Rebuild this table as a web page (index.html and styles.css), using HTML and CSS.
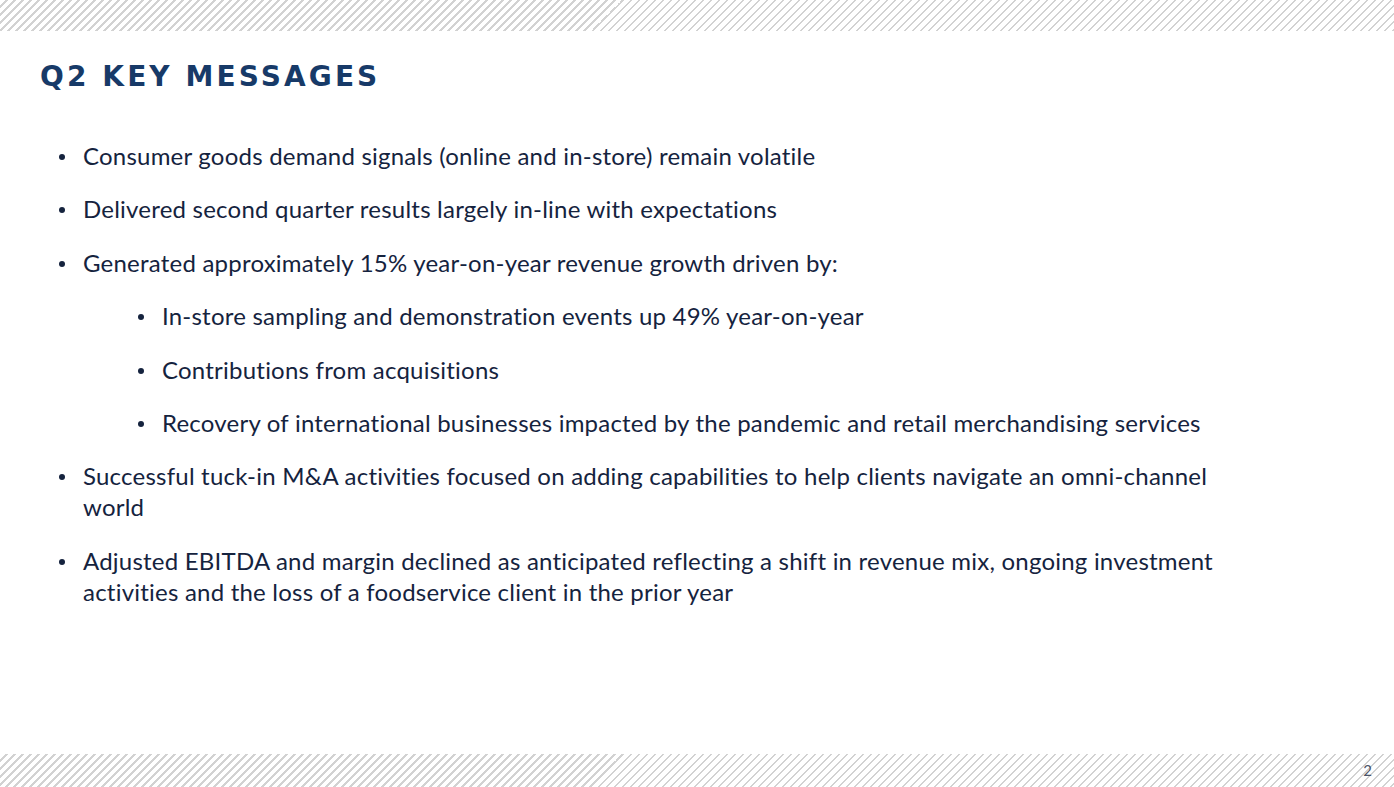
FILE: index.html
```html
<!DOCTYPE html>
<html>
<head>
<meta charset="utf-8">
<link rel="stylesheet" href="styles.css">
</head>
<body>
<div class="slide">
  <div class="band band-top"></div>
  <main class="content">
    <h1 class="title">Q2 KEY MESSAGES</h1>
    <ul class="list">
      <li>Consumer goods demand signals (online and in-store) remain volatile</li>
      <li>Delivered second quarter results largely in-line with expectations</li>
      <li>Generated approximately 15% year-on-year revenue growth driven by:
        <ul class="sublist">
          <li>In-store sampling and demonstration events up 49% year-on-year</li>
          <li>Contributions from acquisitions</li>
          <li>Recovery of international businesses impacted by the pandemic and retail merchandising services</li>
        </ul>
      </li>
      <li>Successful tuck-in M&amp;A activities focused on adding capabilities to help clients navigate an omni-channel world</li>
      <li>Adjusted EBITDA and margin declined as anticipated reflecting a shift in revenue mix, ongoing investment activities and the loss of a foodservice client in the prior year</li>
    </ul>
  </main>
  <footer class="band band-bottom"><span class="page-num">2</span></footer>
</div>
</body>
</html>
```

FILE: styles.css
```css
html, body {
  margin: 0;
  padding: 0;
  background: #ffffff;
}
.slide {
  width: 1394px;
  height: 787px;
  display: flex;
  flex-direction: column;
  overflow: hidden;
}
.band {
  background-image: repeating-linear-gradient(135deg, #ffffff 0px, #ffffff 4px, #d2d2d2 4px, #d2d2d2 5.66px);
}
.band-top {
  height: 31px;
  flex: none;
}
.content {
  flex: 1;
  padding: 0 0 0 40px;
}
.title {
  margin: 29px 0 0 0;
  font-family: "DejaVu Sans", "Lato", sans-serif;
  font-weight: 700;
  font-size: 28px;
  line-height: 34px;
  letter-spacing: 3.1px;
  color: #173a68;
}
.list {
  list-style: none;
  margin: 46px 0 0 0;
  padding: 0;
  width: 1190px;
  font-family: "Lato", "Liberation Sans", sans-serif;
  font-size: 24px;
  letter-spacing: 0.22px;
  line-height: 31px;
  color: #15233e;
}
.list li {
  position: relative;
  padding-left: 43px;
  margin-top: 22.4px;
}
.list > li:first-child {
  margin-top: 0;
}
.list li::before {
  content: "";
  position: absolute;
  left: 19px;
  top: 14px;
  width: 6px;
  height: 6px;
  border-radius: 50%;
  background: #15233e;
}
.sublist {
  list-style: none;
  margin: 0;
  padding: 0 0 0 36px;
}
.band-bottom {
  height: 33px;
  flex: none;
  position: relative;
}
.page-num {
  position: absolute;
  right: 22px;
  top: 7px;
  font-family: "Lato", "Liberation Sans", sans-serif;
  font-size: 15px;
  color: #4b5468;
}
```
